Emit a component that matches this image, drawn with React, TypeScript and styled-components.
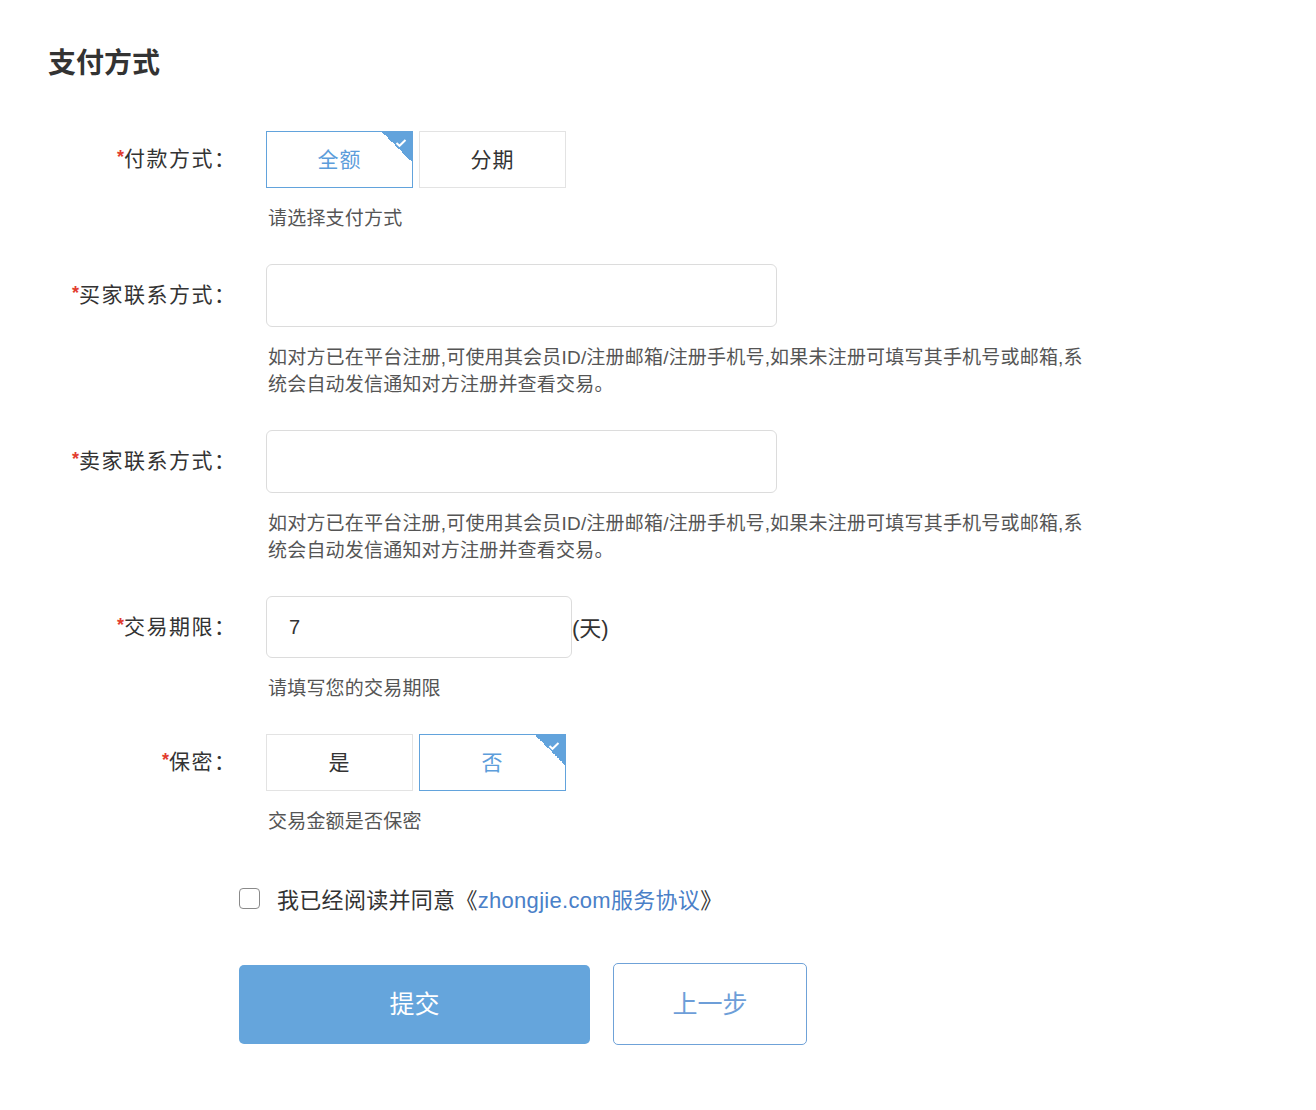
import styled, { createGlobalStyle } from 'styled-components'
import { ReactNode, useState } from 'react'

const GlobalStyle = createGlobalStyle`
  body {
    margin: 0;
    background: #fff;
    font-family: "Liberation Sans", "Noto Sans CJK SC", sans-serif;
    color: #333;
  }
`

const Page = styled.div`
  padding: 42px 0 60px 48px;
`

const Title = styled.h2`
  margin: 0;
  font-size: 28px;
  line-height: 44px;
  font-weight: bold;
  color: #333;
`

const Form = styled.div`
  margin-top: 45px;
`

const Field = styled.div`
  display: grid;
  grid-template-columns: 187px 1fr;
  column-gap: 31px;
  row-gap: 16.5px;
  align-items: center;
  margin-bottom: 32.5px;
`

const Label = styled.label`
  justify-self: end;
  padding-bottom: 5px;
  margin-right: -1.5px;
  font-size: 21px;
  letter-spacing: 1.5px;
  color: #333;
  white-space: nowrap;
`

const Star = styled.span`
  color: #e23c2e;
  font-size: 18px;
  font-weight: bold;
  letter-spacing: 0;
  vertical-align: 3px;
`

const Hint = styled.div`
  grid-column: 2;
  font-size: 19px;
  line-height: 27px;
  letter-spacing: 0.2px;
  color: #555;
  margin-left: 2px;
`

const Options = styled.div`
  display: flex;
  gap: 6px;
`

const Option = styled.button<{ $active?: boolean }>`
  position: relative;
  width: 147px;
  height: 57px;
  padding: 0 0 4px;
  background: #fff;
  border: 1px solid ${(p) => (p.$active ? '#62a3dc' : '#e3e3e3')};
  color: ${(p) => (p.$active ? '#5c9ddb' : '#333')};
  font-family: inherit;
  font-size: 21px;
  letter-spacing: 1px;
  cursor: pointer;
  overflow: hidden;
`

const Corner = styled.span`
  position: absolute;
  top: 0;
  right: 0;
  width: 30px;
  height: 30px;
  background: linear-gradient(45deg, transparent 50%, #62a3dc 50%);
`

const Input = styled.input<{ $w: number; $h: number }>`
  box-sizing: border-box;
  width: ${(p) => p.$w}px;
  height: ${(p) => p.$h}px;
  padding: 0 22px;
  border: 1px solid #dcdcdc;
  border-radius: 6px;
  font-family: inherit;
  font-size: 20px;
  color: #333;
  outline: none;
`

const InputWrap = styled.div`
  display: flex;
  align-items: center;
  font-size: 22px;
  color: #333;
`

const Unit = styled.span`
  padding-bottom: 3px;
`

const Footer = styled.div`
  padding-left: 191px;
`

const Agree = styled.label`
  display: flex;
  align-items: center;
  height: 30px;
  margin-top: 48.5px;
  font-size: 22px;
  letter-spacing: 0.3px;
  color: #333;
  cursor: pointer;
`

const Box = styled.span`
  box-sizing: border-box;
  width: 21px;
  height: 21px;
  border: 1.5px solid #8a8a8a;
  border-radius: 4px;
  margin-right: 17px;
`

const Link = styled.a`
  color: #4a80c8;
  text-decoration: none;
`

const Buttons = styled.div`
  display: flex;
  align-items: center;
  gap: 23px;
  margin-top: 50px;
`

const Primary = styled.button`
  width: 351px;
  height: 79px;
  padding: 0 0 4px;
  border: none;
  border-radius: 5px;
  background: #65a5dc;
  color: #fff;
  font-family: inherit;
  font-size: 25px;
  cursor: pointer;
`

const Secondary = styled.button`
  width: 194px;
  height: 82px;
  padding: 0 0 4px;
  border: 1px solid #6fa2d8;
  border-radius: 5px;
  background: #fff;
  color: #6d9ed8;
  font-family: inherit;
  font-size: 25px;
  cursor: pointer;
`

const Check = () => (
  <svg
    width="12"
    height="10"
    viewBox="0 0 12 10"
    style={{ position: 'absolute', top: 6, right: 5 }}
  >
    <path d="M1.5 5 L4.5 7.8 L10.5 2" stroke="#fff" strokeWidth="2" fill="none" />
  </svg>
)

const Choice = ({ items, value, onPick }: { items: string[]; value: string; onPick: (v: string) => void }) => (
  <Options>
    {items.map((it) => (
      <Option key={it} $active={it === value} onClick={() => onPick(it)}>
        {it}
        {it === value && (
          <>
            <Corner />
            <Check />
          </>
        )}
      </Option>
    ))}
  </Options>
)

const Row = ({ label, hint, children }: { label: string; hint: ReactNode; children: ReactNode }) => (
  <Field>
    <Label>
      <Star>*</Star>
      {label}：
    </Label>
    {children}
    <Hint>{hint}</Hint>
  </Field>
)

const contactHint = (
  <>
    如对方已在平台注册,可使用其会员ID/注册邮箱/注册手机号,如果未注册可填写其手机号或邮箱,系
    <br />
    统会自动发信通知对方注册并查看交易。
  </>
)

export default function App() {
  const [pay, setPay] = useState('全额')
  const [secret, setSecret] = useState('否')
  const [days, setDays] = useState('7')

  return (
    <Page>
      <GlobalStyle />
      <Title>支付方式</Title>
      <Form>
        <Row label="付款方式" hint="请选择支付方式">
          <Choice items={['全额', '分期']} value={pay} onPick={setPay} />
        </Row>
        <Row label="买家联系方式" hint={contactHint}>
          <Input $w={511} $h={63} />
        </Row>
        <Row label="卖家联系方式" hint={contactHint}>
          <Input $w={511} $h={63} />
        </Row>
        <Row label="交易期限" hint="请填写您的交易期限">
          <InputWrap>
            <Input $w={306} $h={62} value={days} onChange={(e) => setDays(e.target.value)} />
            <Unit>(天)</Unit>
          </InputWrap>
        </Row>
        <Row label="保密" hint="交易金额是否保密">
          <Choice items={['是', '否']} value={secret} onPick={setSecret} />
        </Row>
      </Form>
      <Footer>
        <Agree>
          <Box />
          我已经阅读并同意《<Link href="#">zhongjie.com服务协议</Link>》
        </Agree>
        <Buttons>
          <Primary>提交</Primary>
          <Secondary>上一步</Secondary>
        </Buttons>
      </Footer>
    </Page>
  )
}
